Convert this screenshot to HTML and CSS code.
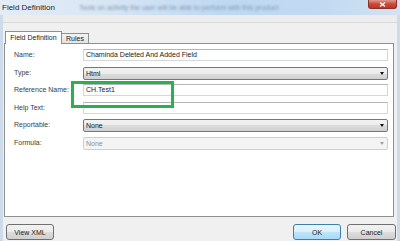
FILE: index.html
```html
<!DOCTYPE html>
<html lang="en">
<head>
    <meta charset="UTF-8">
    <meta name="viewport" content="width=device-width, initial-scale=1.0">
    <title>Field Definition</title>
    <link rel="stylesheet" href="styles.css">
</head>
<body>

<div class="dialog">
    <div class="titlebar">
        <span class="title">Field Definition</span>
        <span class="ghost">Tools on activity the user will be able to perform with this product</span>
        <span class="close">
            <svg width="7" height="5" viewBox="0 0 7 5"><path d="M1 0.5 L6 4.5 M6 0.5 L1 4.5" stroke="#fff" stroke-width="1.3"/></svg>
        </span>
    </div>

    <div class="frame">
        <div class="client">
            <div class="strip"></div>

            <div class="tabs">
                <div class="tab active">Field Definition</div>
                <div class="tab">Rules</div>
            </div>

            <div class="panel">
                <div class="row">
                    <span class="label">Name:</span>
                    <div class="field">Chaminda Deleted And Added Field</div>
                </div>
                <div class="row">
                    <span class="label">Type:</span>
                    <div class="combo">Html<span class="caret"></span></div>
                </div>
                <div class="row">
                    <span class="label">Reference Name:</span>
                    <div class="field">CH.Test1</div>
                </div>
                <div class="row">
                    <span class="label">Help Text:</span>
                    <div class="field"></div>
                </div>
                <div class="row">
                    <span class="label">Reportable:</span>
                    <div class="combo">None<span class="caret"></span></div>
                </div>
                <div class="row">
                    <span class="label">Formula:</span>
                    <div class="combo disabled">None<span class="caret"></span></div>
                </div>

                <!-- highlight round the reference name -->
                <div class="highlight"></div>
            </div>

            <div class="footer">
                <button class="btn">View XML</button>
                <button class="btn default push">OK</button>
                <button class="btn cancel">Cancel</button>
            </div>
        </div>
    </div>
</div>

</body>
</html>
```

FILE: styles.css
```css
body {
    margin: 0;
    font-family: "Liberation Sans", Arial, sans-serif;
    font-size: 7px;
    background: #cddbea;
}
.dialog {
    width: 400px;
    height: 241px;
    display: flex;
    flex-direction: column;
    overflow: hidden;
}
.titlebar {
    flex: none;
    height: 15px;
    display: flex;
    align-items: center;
    background: linear-gradient(to right, #e4ecf6 0%, #d9e6f4 25%, #bfd8f1 55%, #c1d9f1 80%, #d2e3f4 100%);
}
.title {
    font-size: 8px;
    color: #1e1e1e;
    margin-left: 2px;
}
.ghost {
    margin-left: 24px;
    color: #8198b2;
    filter: blur(1px);
    white-space: nowrap;
}
.close {
    align-self: flex-start;
    margin-left: auto;
    margin-right: 3px;
    width: 29px;
    height: 9px;
    box-sizing: border-box;
    border: 1px solid #8e3024;
    border-top: none;
    border-radius: 0 0 3px 3px;
    background: linear-gradient(#e0998c, #c84a39 50%, #b9382a);
    display: flex;
    align-items: center;
    justify-content: center;
}
.frame {
    flex: 1;
    display: flex;
    padding: 0 3px;
    background: #cddbea;
}
.client {
    flex: 1;
    display: flex;
    flex-direction: column;
    background: #f0f0f0;
}
.strip {
    height: 7px;
    background: #ececec;
    border-bottom: 1px solid #dadada;
}
.tabs {
    display: flex;
    align-items: flex-end;
    height: 12px;
    margin: 8px 0 0 2px;
}
.tab {
    height: 10px;
    box-sizing: border-box;
    padding: 0 4px;
    border: 1px solid #8e8f8f;
    border-bottom: none;
    border-left: none;
    background: linear-gradient(#f2f2f2, #e3e3e3);
    color: #222;
    line-height: 9px;
}
.tab.active {
    position: relative;
    top: 1px;
    z-index: 1;
    width: 57px;
    height: 13px;
    border-left: 1px solid #8e8f8f;
    background: #fff;
    line-height: 11px;
    text-align: center;
}
.panel {
    position: relative;
    height: 174px;
    box-sizing: border-box;
    margin: 0 3px 0 1px;
    padding: 5px 5px 0 9px;
    border: 1px solid #8e8f8f;
    background: #fff;
}
.row {
    display: flex;
    align-items: flex-start;
    height: 17px;
}
.row:nth-child(odd) {
    height: 18px;
}
.label {
    width: 69px;
    flex: none;
    line-height: 12px;
    color: #3c3c3c;
}
.field {
    flex: 1;
    height: 12px;
    box-sizing: border-box;
    padding-left: 2px;
    border: 1px solid #d4d7db;
    border-top-color: #b4b6bb;
    background: #fff;
    line-height: 10px;
    color: #1a1a1a;
}
.combo {
    flex: 1;
    height: 13px;
    box-sizing: border-box;
    padding-left: 2px;
    display: flex;
    align-items: center;
    border: 1px solid #767676;
    border-radius: 2px;
    background: linear-gradient(#f3f3f3 0%, #ebebeb 50%, #dddddd 50%, #d0d0d0 100%);
    color: #1a1a1a;
}
.combo.disabled {
    border-color: #cfcfcf;
    background: #f4f4f4;
    color: #909090;
}
.caret {
    margin-left: auto;
    margin-right: 3px;
    width: 0;
    height: 0;
    border-left: 2.5px solid transparent;
    border-right: 2.5px solid transparent;
    border-top: 3px solid #111;
}
.combo.disabled .caret {
    border-top-color: #a0a0a0;
}
.highlight {
    position: absolute;
    left: 66px;
    top: 37px;
    width: 103px;
    height: 27px;
    box-sizing: border-box;
    border: 3px solid #29b14b;
}
.footer {
    display: flex;
    padding: 7px 1px 0 3px;
}
.btn {
    width: 48px;
    height: 16px;
    padding: 0;
    font-family: inherit;
    font-size: 7px;
    color: #222;
    border: 1px solid #707070;
    border-radius: 3px;
    background: linear-gradient(#f2f2f2 0%, #ebebeb 50%, #dddddd 50%, #cfcfcf 100%);
}
.btn.default {
    border-color: #3c7fb1;
    background: linear-gradient(#eaf6fd 0%, #d9f0fc 50%, #bee6fd 50%, #a7d9f5 100%);
}
.push {
    margin-left: auto;
}
.cancel {
    width: 49px;
    margin-left: 6px;
}
```
